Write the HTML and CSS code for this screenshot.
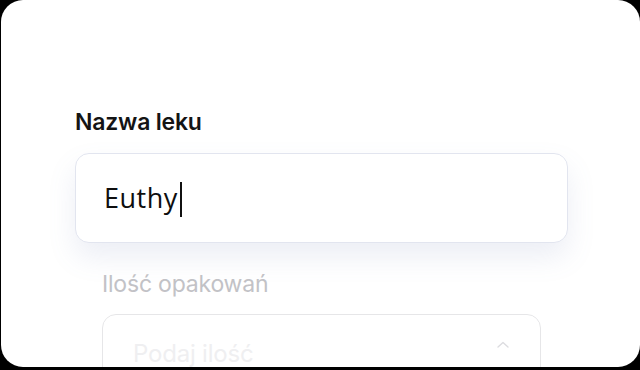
FILE: index.html
```html
<!DOCTYPE html>
<html lang="pl">
<head>
<meta charset="utf-8">
<link rel="stylesheet" href="styles.css">
</head>
<body>
<div class="card">
  <div class="field">
    <div class="label">Nazwa leku</div>
    <div class="input"><span class="value">Euthy</span><span class="caret"></span></div>
  </div>
  <div class="field faded">
    <div class="label2">Ilość opakowań</div>
    <div class="select">
      <span class="placeholder">Podaj ilość</span>
      <svg class="chev" width="12" height="7" viewBox="0 0 12 7"><path d="M1 6 L6 1.5 L11 6" fill="none" stroke="#dcdce0" stroke-width="1.4" stroke-linecap="round" stroke-linejoin="round"/></svg>
    </div>
  </div>
</div>
</body>
</html>
```
FILE: styles.css
```css
html, body {
  margin: 0;
  padding: 0;
  background: #000;
  width: 640px;
  height: 370px;
  overflow: hidden;
}
.card {
  margin-left: 1px;
  width: 639px;
  height: 367px;
  background: #fff;
  border-radius: 22px;
  overflow: hidden;
  box-sizing: border-box;
  padding: 109px 0 0 74px;
  display: flex;
  flex-direction: column;
}
.label {
  font-family: Inter, "Liberation Sans", sans-serif;
  font-weight: 600;
  font-size: 23px;
  line-height: 27px;
  color: #141414;
  letter-spacing: -0.2px;
}
.input {
  margin-top: 17px;
  width: 493px;
  height: 90px;
  box-sizing: border-box;
  border: 1px solid #e2e5ef;
  border-radius: 14px;
  background: #fff;
  box-shadow: 0 14px 28px rgba(110, 125, 175, 0.13);
  display: flex;
  align-items: center;
  padding-left: 28px;
}
.value {
  font-family: "Open Sans", "Noto Sans", sans-serif;
  font-size: 27px;
  color: #0e0e0e;
  line-height: 34px;
  letter-spacing: 0.5px;
}
.caret {
  width: 2px;
  height: 35px;
  background: #111;
  margin-left: 2px;
  margin-top: 2px;
}
.faded {
  padding-left: 27px;
  margin-top: 28px;
}
.label2 {
  font-family: Inter, "Liberation Sans", sans-serif;
  font-size: 23px;
  line-height: 26px;
  color: #c2c2c6;
  letter-spacing: -0.2px;
}
.select {
  margin-top: 17px;
  width: 439px;
  height: 80px;
  box-sizing: border-box;
  border: 1.5px solid #e6e6e8;
  border-radius: 14px;
  display: flex;
  align-items: flex-start;
  justify-content: space-between;
  padding: 25px 31px 0 30px;
}
.placeholder {
  font-family: Inter, "Liberation Sans", sans-serif;
  font-size: 24px;
  line-height: 28px;
  color: #efeff1;
  letter-spacing: -0.2px;
}
.chev {
  margin-top: 1px;
}
```
